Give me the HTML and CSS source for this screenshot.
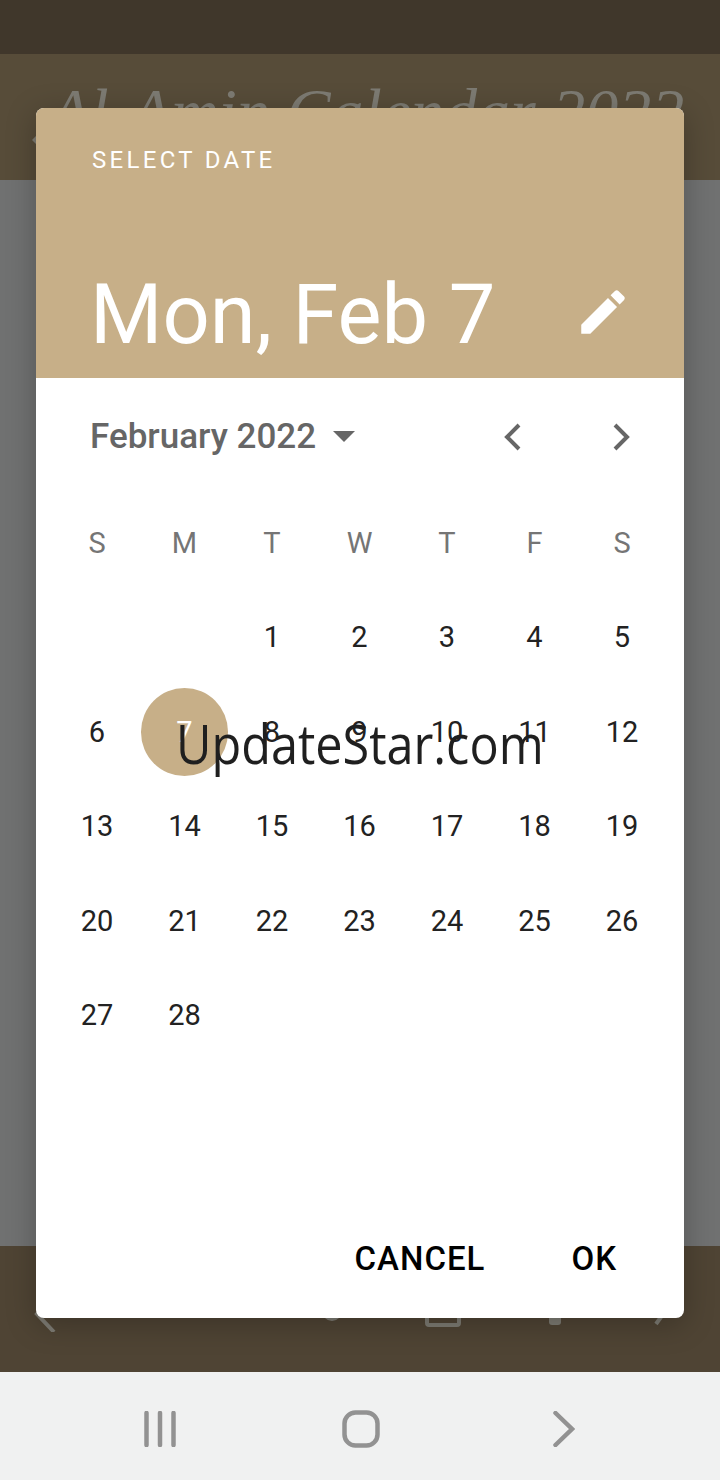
FILE: index.html
```html
<!DOCTYPE html>
<html lang="en">

<head>
    <meta charset="UTF-8">
    <meta name="viewport" content="width=device-width, initial-scale=1.0">
    <title>Select date</title>
    <link rel="stylesheet" href="styles.css">
</head>

<body>
    <div class="status-bar"></div>

    <div class="app-bar">
        <svg class="app-back" viewBox="0 0 12 20"><path d="M10 2 2 10l8 8" /></svg>
        <span class="app-title">Al-Amin Calendar 2022</span>
    </div>

    <div class="app-content"></div>

    <div class="bottom-bar">
        <svg class="bottom-icon icon-prev" viewBox="0 0 24 40"><path d="M21 4 4 22l17 18" /></svg>
        <svg class="bottom-icon icon-dot" viewBox="0 0 22 22"><circle cx="11" cy="11" r="8" /></svg>
        <svg class="bottom-icon icon-box" viewBox="0 0 36 40"><rect x="2" y="2" width="32" height="36" rx="2" /></svg>
        <svg class="bottom-icon icon-pin" viewBox="0 0 12 40"><rect x="0" y="0" width="12" height="40" rx="3" /></svg>
        <svg class="bottom-icon icon-next" viewBox="0 0 14 40"><path d="M2 38 12 24 2 10" /></svg>
    </div>

    <div class="nav-bar">
        <svg class="nav-icon nav-recent" viewBox="0 0 32 36">
            <path d="M2.500 2v32M16 2v32M29.500 2v32" />
        </svg>
        <svg class="nav-icon nav-home" viewBox="0 0 38 38">
            <rect x="2.500" y="2.500" width="33" height="33" rx="11" />
        </svg>
        <svg class="nav-icon nav-back" viewBox="0 0 22 36">
            <path d="M2.500 2 19 18 2.500 34" />
        </svg>
    </div>

    <div class="overlay">
        <div class="dialog">
            <div class="dialog-header">
                <div class="select-label">SELECT DATE</div>
                <div class="date-row">
                    <span class="date-title">Mon, Feb 7</span>
                    <svg class="edit-icon" viewBox="0 0 24 24">
                        <path d="M3 17.250V21h3.750L17.810 9.940l-3.750-3.750L3 17.250zM20.710 7.040c.39-.39.39-1.020 0-1.410l-2.340-2.340c-.39-.39-1.020-.39-1.410 0l-1.830 1.830 3.750 3.750 1.830-1.830z" />
                    </svg>
                </div>
            </div>

            <div class="month-row">
                <span class="month-name">February 2022</span>
                <svg class="month-caret" viewBox="0 0 22 12"><path d="M0 0h22L11 11z" /></svg>
                <svg class="month-arrow arrow-left" viewBox="0 0 18 28"><path d="M15 2 3 14l12 12" /></svg>
                <svg class="month-arrow arrow-right" viewBox="0 0 18 28"><path d="M3 2l12 12L3 26" /></svg>
            </div>

            <div class="calendar">
                <div class="weekday">S</div>
                <div class="weekday">M</div>
                <div class="weekday">T</div>
                <div class="weekday">W</div>
                <div class="weekday">T</div>
                <div class="weekday">F</div>
                <div class="weekday">S</div>

                <div class="day"></div>
                <div class="day"></div>
                <div class="day">1</div>
                <div class="day">2</div>
                <div class="day">3</div>
                <div class="day">4</div>
                <div class="day">5</div>

                <div class="day">6</div>
                <div class="day selected"><span>7</span></div>
                <div class="day">8</div>
                <div class="day">9</div>
                <div class="day">10</div>
                <div class="day">11</div>
                <div class="day">12</div>

                <div class="day">13</div>
                <div class="day">14</div>
                <div class="day">15</div>
                <div class="day">16</div>
                <div class="day">17</div>
                <div class="day">18</div>
                <div class="day">19</div>

                <div class="day">20</div>
                <div class="day">21</div>
                <div class="day">22</div>
                <div class="day">23</div>
                <div class="day">24</div>
                <div class="day">25</div>
                <div class="day">26</div>

                <div class="day">27</div>
                <div class="day">28</div>
            </div>

            <div class="dialog-actions">
                <span class="action-btn">CANCEL</span>
                <span class="action-btn">OK</span>
            </div>
        </div>
    </div>

    <div class="watermark">UpdateStar.com</div>
</body>

</html>
```

FILE: styles.css
```css
body {
    font-family: Roboto, 'Liberation Sans', sans-serif;
    background-color: #707171;
    margin: 0;
    padding: 0;
    width: 720px;
    height: 1480px;
    position: relative;
    overflow: hidden;
    display: flex;
    flex-direction: column;
}

.status-bar {
    height: 54px;
    background-color: #40372b;
}

.app-bar {
    height: 126px;
    background-color: #574c39;
    box-sizing: border-box;
    padding: 18px 0 0 50px;
    overflow: hidden;
    position: relative;
}

.app-back {
    position: absolute;
    left: 32px;
    top: 76px;
    width: 12px;
    height: 20px;
    fill: none;
    stroke: #7d7b73;
    stroke-width: 3;
}

.app-title {
    font-family: 'Liberation Serif', serif;
    font-style: italic;
    font-size: 66px;
    line-height: 80px;
    color: #7d7b73;
    white-space: nowrap;
}

.app-content {
    flex: 1;
    background-color: #707171;
}

.bottom-bar {
    height: 126px;
    background-color: #4f4434;
    position: relative;
}

.bottom-icon {
    position: absolute;
    fill: none;
    stroke: #7d7b73;
    stroke-width: 4;
}

.icon-prev {
    left: 33px;
    top: 46px;
    width: 24px;
    height: 40px;
}

.icon-dot {
    left: 321px;
    top: 54px;
    width: 22px;
    height: 22px;
}

.icon-box {
    left: 425px;
    top: 41px;
    width: 36px;
    height: 40px;
}

.icon-pin {
    left: 549px;
    top: 39px;
    width: 12px;
    height: 40px;
    fill: #7d7b73;
    stroke: none;
}

.icon-next {
    left: 654px;
    top: 40px;
    width: 14px;
    height: 40px;
}

.nav-bar {
    height: 108px;
    background-color: #f0f1f1;
    position: relative;
}

.nav-icon {
    position: absolute;
    fill: none;
    stroke: #929292;
    stroke-width: 4.500;
    stroke-linecap: round;
}

.nav-recent {
    left: 144px;
    top: 39px;
    width: 32px;
    height: 36px;
}

.nav-home {
    left: 342px;
    top: 38px;
    width: 38px;
    height: 38px;
}

.nav-back {
    left: 553px;
    top: 39px;
    width: 22px;
    height: 36px;
}

.overlay {
    position: absolute;
    left: 36px;
    top: 108px;
}

.dialog {
    width: 648px;
    height: 1210px;
    background-color: #fff;
    border-radius: 8px;
    box-shadow: 0 6px 30px rgba(0, 0, 0, 0.25);
    overflow: hidden;
    display: flex;
    flex-direction: column;
}

.dialog-header {
    height: 270px;
    box-sizing: border-box;
    background-color: #c7af88;
    padding: 36px 52px 0 56px;
    color: #fff;
    display: flex;
    flex-direction: column;
}

.select-label {
    font-size: 24px;
    line-height: 30px;
    letter-spacing: 3.300px;
    margin-top: 1px;
}

.date-row {
    margin-top: auto;
    height: 112px;
    display: flex;
    align-items: flex-start;
    justify-content: space-between;
}

.date-title {
    font-size: 83px;
    line-height: 98px;
    font-weight: 400;
    white-space: nowrap;
    margin-left: -2px;
}

.edit-icon {
    width: 58px;
    height: 58px;
    fill: #fff;
    margin-top: 17px;
}

.month-row {
    height: 117.500px;
    box-sizing: border-box;
    padding: 0 54px 0 54px;
    display: flex;
    align-items: center;
    color: #666;
}

.month-name {
    font-size: 35px;
    font-weight: 500;
}

.month-caret {
    width: 22px;
    height: 12px;
    margin-left: 17px;
    fill: #666;
}

.month-arrow {
    width: 18px;
    height: 28px;
    fill: none;
    stroke: #666;
    stroke-width: 4;
}

.arrow-left {
    margin-left: auto;
    margin-right: 90px;
}

.calendar {
    margin-left: 17.250px;
    display: grid;
    grid-template-columns: repeat(7, 87.500px);
    grid-auto-rows: 94.500px;
}

.weekday,
.day {
    display: flex;
    align-items: center;
    justify-content: center;
    font-size: 29px;
    color: #222;
}

.weekday {
    color: #757575;
}

.day.selected span {
    width: 88px;
    height: 88px;
    border-radius: 50%;
    background-color: #c7af88;
    color: #fff;
    display: flex;
    align-items: center;
    justify-content: center;
}

.dialog-actions {
    margin-top: auto;
    height: 120px;
    box-sizing: border-box;
    padding: 0 67px 0 0;
    display: flex;
    justify-content: flex-end;
    align-items: center;
    gap: 86px;
}

.action-btn {
    font-size: 33px;
    font-weight: 500;
    letter-spacing: 1px;
    color: #000;
}

.watermark {
    position: absolute;
    left: 176px;
    top: 706px;
    font-family: 'Open Sans', sans-serif;
    font-size: 54px;
    line-height: 74px;
    color: #1f1f1f;
    white-space: nowrap;
    transform: scaleX(0.9);
    transform-origin: left center;
}
```
